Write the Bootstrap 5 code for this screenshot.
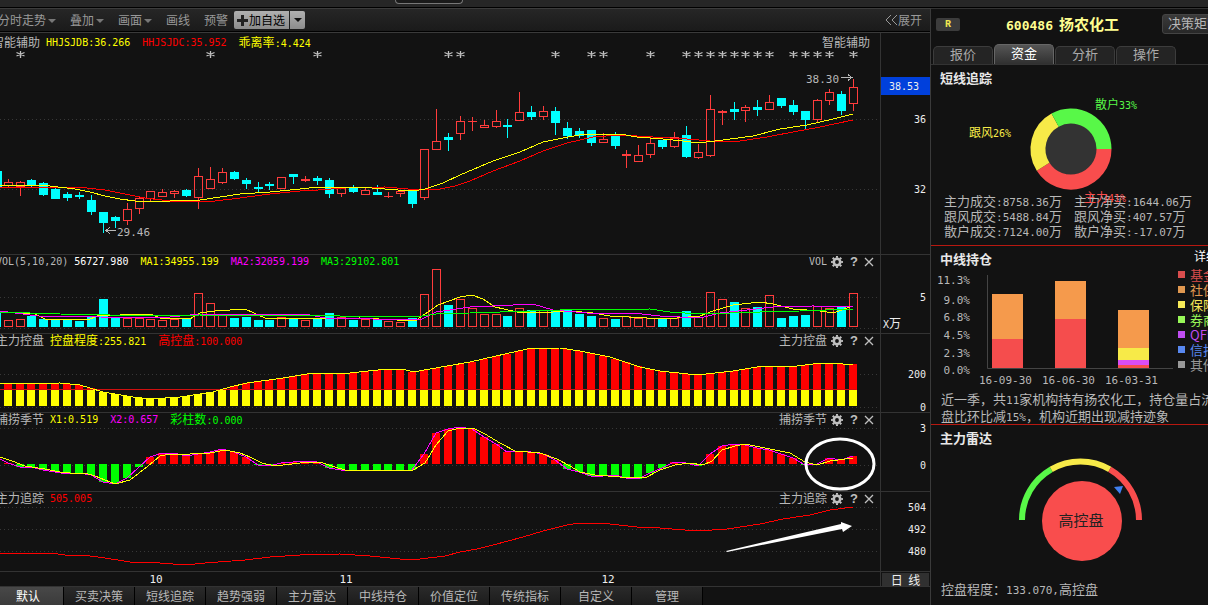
<!DOCTYPE html>
<html lang="zh-CN">
<head>
<meta charset="utf-8">
<meta name="viewport" content="width=device-width, initial-scale=1">
<title>600486 扬农化工</title>
<link href="https://cdn.jsdelivr.net/npm/bootstrap@5.3.0/dist/css/bootstrap.min.css" rel="stylesheet">
<style>
  body { background: #121212; color: #b8b8b8; font: 12px/14px "Noto Sans CJK SC", sans-serif; overflow-x: hidden; }
  button, a { font: inherit; color: inherit; text-decoration: none; }
  button { background: none; border: 0; padding: 0; }
  svg { display: block; }
  .num { font-family: "DejaVu Sans Mono", "Noto Sans CJK SC", monospace; font-size: 10px; line-height: 1; }
  .num-lg { font-family: "DejaVu Sans Mono", "Noto Sans CJK SC", monospace; font-size: 11px; line-height: 1; }
  .t-yellow { color: #ff0; } .t-red { color: #f00; } .t-magenta { color: #f0f; } .t-green { color: #0f0; }

  .top-strip { height: 8px; background: #262626; border-bottom: 1px solid #000; }
  .top-pill { width: 68px; height: 4px; margin-left: 395px; background: #1a1a1a; border: 1px solid #777; border-top: 0; border-radius: 0 0 8px 8px; }
  .market { min-width: 0; border-right: 1px solid #3a3a3a; }
  .tools { height: 25px; background: linear-gradient(#262626, #1a1a1a); border-top: 1px solid #3c3c3c; border-bottom: 1px solid #3a3a3a; box-shadow: inset 0 -1px #000; color: #999; gap: 14px; padding: 0 8px 1px 0; }
  .tools .first { margin-left: -2px; }
  .caret::after { content: ""; display: inline-block; margin-left: 2px; vertical-align: 2px; border: 4px solid transparent; border-top-color: #777; border-bottom: 0; }
  .add-group { height: 18px; margin-left: -8px; color: #000; }
  .add-group button { background: linear-gradient(#b0b0b0, #8c8c8c); border-radius: 2px 0 0 2px; padding: 0 4px 0 3px; gap: 1px; }
  .add-group button + button { border-radius: 0 2px 2px 0; margin-left: 1px; width: 15px; padding: 0; }

  .pane { border-bottom: 1px solid #333; }
  .pane-plot { min-width: 0; overflow: hidden; border-right: 1px solid #333; }
  .pane-head { height: 14px; white-space: nowrap; padding-right: 5px; margin-left: -4px; line-height: 12px; }
  .pane-head > .num, .pane-head .vals > .num { line-height: 14px; }
  .pane-head .vals { gap: 12px; margin-left: 6px; }
  .pane-head.main { height: 18px; margin-left: -8px; padding: 3px 10px 0 0; }
  .pane-head .tool { width: 12px; height: 13px; margin-left: 4px; color: #c0c0c0; display: flex; justify-content: center; align-items: center; }
  .pane-head .tool + .tool { margin-left: 5px; }
  .pane-head .tool + .tool + .tool { margin-left: 3px; }
  .q-mark { font: bold 13px/14px "Liberation Sans", sans-serif; }
  .axis-col { flex: 0 0 49px; }
  .plot { width: 100%; overflow: hidden; }
  .plot svg { overflow: visible; }
  svg text { font-family: "DejaVu Sans Mono", "Noto Sans CJK SC", monospace; }
  .axis-col text { font-size: 10px; fill: #eee; }
  .period { margin: 1px 1px 0; background: #303030; color: #eee; height: 13px; line-height: 12px; width: 47px; white-space: pre; }

  .tpl-bar { height: 19px; margin-left: -7px; }
  .tpl-bar button { flex: 0 0 71px; background: linear-gradient(#2a2a2a, #1b1b1b); border-right: 1px solid #000; padding-bottom: 2px; white-space: nowrap; }
  .tpl-bar button.active { background: linear-gradient(#484848, #3a3a3a); color: #fff; }

  .stock { flex: 0 0 277px; overflow: hidden; border-top: 1px solid #333; white-space: nowrap; }
  .stock-head { height: 35px; padding: 4px 0 9px 5px; }
  .r-mark { width: 24px; height: 13px; background: #3c3c3c; color: #f0e850; border-radius: 2px; font: bold 10px/13px "Liberation Mono", monospace; text-align: center; }
  .stock-name { color: #ffff90; font: bold 15px/18px "Noto Sans CJK SC", sans-serif; margin: 0 0 0 46px; width: 114px; }
  .stock-name .code { font: bold 13px/1 "DejaVu Sans Mono", monospace; margin-right: 6px; }
  .matrix { background: linear-gradient(#3a3a3a, #282828); border: 1px solid #444; border-radius: 3px; height: 20px; padding: 0 5px 2px; font-size: 13px; margin-left: 42px; }
  .stock-tabs { height: 21px; padding-left: 2px; gap: 1px; border-bottom: 1px solid #333; }
  .stock-tabs button { width: 60px; height: 18px; border: 1px solid #3c3c3c; border-bottom: 0; border-radius: 5px 5px 0 0; background: #242424; font-size: 13px; padding-bottom: 3px; color: #aaa; }
  .stock-tabs button.active { height: 20px; background: linear-gradient(#555, #303030); border-color: #666; color: #fff; }
  .block-title { font: bold 13px/18px "Noto Sans CJK SC", sans-serif; color: #e8e8e8; margin: 0; padding: 4px 0 1px 9px; }
  .block-rule { border-bottom: 1px solid #b81810; }
  .deal-grid { display: grid; grid-template-columns: 130px 130px; grid-auto-rows: 15px; padding: 0 0 6px 13px; font-size: 13px; line-height: 13px; }
  .detail-link { display: block; padding: 3px 0 4px 16px; }
  .holders { list-style: none; margin: 0; padding: 0; line-height: 15px; font-size: 13px; }
  .holders li::before { content: ""; flex: 0 0 7px; height: 7px; margin-right: 5px; background: currentColor; }
  .comment { font-size: 13px; line-height: 17px; margin: 0; padding-left: 10px; height: 34px; }
  .degree { font-size: 13px; padding-left: 10px; margin: 0; }
</style>
</head>
<body>
<div class="top-strip"><div class="top-pill"></div></div>
<div class="d-flex">
  <main class="market flex-grow-1">
    <div class="tools d-flex align-items-center text-nowrap">
      <button class="first caret">分时走势</button>
      <button class="caret">叠加</button>
      <button class="caret">画面</button>
      <button>画线</button>
      <button>预警</button>
      <div class="add-group d-flex">
        <button class="d-flex align-items-center"><svg width="11" height="11"><path d="M5.500 0v11M0 5.500h11" stroke="#222" stroke-width="3"/></svg>加自选</button>
        <button aria-label="更多"><svg width="15" height="18"><path d="M4 7h8l-4 4z" fill="#111"/></svg></button>
      </div>
      <a href="#" class="ms-auto d-flex align-items-center"><svg width="13" height="12"><path d="M6 1L1 6l5 5M12 1L7 6l5 5" fill="none" stroke="#999"/></svg>展开</a>
    </div>

    <section class="pane d-flex">
      <div class="pane-plot flex-grow-1">
        <div class="pane-head main d-flex">
          <span>智能辅助</span>
          <div class="vals d-flex"><span class="num t-yellow">HHJSJDB:36.266</span><span class="num t-red">HHJSJDC:35.952</span><span class="t-yellow">乖离率<span class="num">:4.424</span></span></div>
          <span class="ms-auto">智能辅助</span>
        </div>
        <svg class="plot" id="kline" height="203"></svg>
      </div>
      <svg class="axis-col" width="49" height="221">
        <rect y="44" width="49" height="18" fill="#0040dc"/>
        <text x="8" y="57">38.53</text><text x="45" y="90" text-anchor="end">36</text><text x="45" y="160" text-anchor="end">32</text>
      </svg>
    </section>

    <section class="pane d-flex">
      <div class="pane-plot flex-grow-1">
        <div class="pane-head d-flex">
          <span class="num">VOL(5,10,20)</span>
          <div class="vals d-flex"><span class="num text-white">56727.980</span><span class="num t-yellow">MA1:34955.199</span><span class="num t-magenta">MA2:32059.199</span><span class="num t-green">MA3:29102.801</span></div>
          <span class="ms-auto num">VOL</span><span class="d-flex" data-tools></span>
        </div>
        <svg class="plot" id="volume" height="64"></svg>
      </div>
      <svg class="axis-col" width="49" height="78"><text x="45" y="46" text-anchor="end">5</text><text x="2" y="73">X<tspan font-size="12">万</tspan></text></svg>
    </section>

    <section class="pane d-flex">
      <div class="pane-plot flex-grow-1">
        <div class="pane-head d-flex">
          <span>主力控盘</span>
          <div class="vals d-flex"><span class="t-yellow">控盘程度<span class="num">:255.821</span></span><span class="t-red">高控盘<span class="num">:100.000</span></span></div>
          <span class="ms-auto">主力控盘</span><span class="d-flex" data-tools></span>
        </div>
        <svg class="plot" id="control" height="64"></svg>
      </div>
      <svg class="axis-col" width="49" height="78"><text x="45" y="44" text-anchor="end">200</text><text x="45" y="77" text-anchor="end">0</text></svg>
    </section>

    <section class="pane d-flex">
      <div class="pane-plot flex-grow-1">
        <div class="pane-head d-flex">
          <span>捕捞季节</span>
          <div class="vals d-flex"><span class="num t-yellow">X1:0.519</span><span class="num t-magenta">X2:0.657</span><span class="t-green">彩柱数<span class="num">:0.000</span></span></div>
          <span class="ms-auto">捕捞季节</span><span class="d-flex" data-tools></span>
        </div>
        <svg class="plot" id="season" height="64"></svg>
      </div>
      <svg class="axis-col" width="49" height="78"><text x="45" y="19" text-anchor="end">3</text><text x="45" y="56" text-anchor="end">0</text></svg>
    </section>

    <section class="pane d-flex">
      <div class="pane-plot flex-grow-1">
        <div class="pane-head d-flex">
          <span>主力追踪</span>
          <div class="vals d-flex"><span class="num t-red">505.005</span></div>
          <span class="ms-auto">主力追踪</span><span class="d-flex" data-tools></span>
        </div>
        <svg class="plot" id="track" height="65"></svg>
      </div>
      <svg class="axis-col" width="49" height="79"><text x="45" y="19" text-anchor="end">504</text><text x="45" y="41" text-anchor="end">492</text><text x="45" y="63" text-anchor="end">480</text></svg>
    </section>

    <div class="pane d-flex">
      <div class="pane-plot flex-grow-1"><svg class="plot" id="months" height="14"></svg></div>
      <div class="axis-col"><button class="period d-block">日  线</button></div>
    </div>

    <div class="overflow-hidden">
      <div class="tpl-bar d-flex">
        <button class="active">默认</button><button>买卖决策</button><button>短线追踪</button><button>趋势强弱</button><button>主力雷达</button><button>中线持仓</button><button>价值定位</button><button>传统指标</button><button>自定义</button><button>管理</button>
      </div>
    </div>
  </main>

  <aside class="stock">
    <div class="stock-head d-flex align-items-center">
      <span class="r-mark flex-shrink-0">R</span>
      <h1 class="stock-name flex-shrink-0"><span class="code">600486</span>扬农化工</h1>
      <button class="matrix flex-shrink-0">决策矩阵</button>
    </div>
    <div class="stock-tabs d-flex align-items-end">
      <button>报价</button><button class="active">资金</button><button>分析</button><button>操作</button>
    </div>

    <section class="block-rule">
      <h2 class="block-title">短线追踪</h2>
      <svg width="277" height="106" viewBox="0 0 277 106" class="overflow-visible position-relative z-1">
        <circle cx="140" cy="60" r="27" fill="#333"/>
        <g fill="none" stroke-width="15">
          <path d="M173 61A33 33 0 0 1 112.100 78.700" stroke="#f94d4d"/>
          <path d="M112.100 78.700A33 33 0 0 1 124.100 32.100" stroke="#f7ea48"/>
          <path d="M124.100 32.100A33 33 0 0 1 173 61" stroke="#58f848"/>
        </g>
        <g font-size="10">
          <text x="164" y="21" fill="#58f848"><tspan font-size="12">散户</tspan>33%</text>
          <text x="38" y="49" fill="#f7ea48"><tspan font-size="12">跟风</tspan>26%</text>
          <text x="153" y="114" fill="#f94d4d"><tspan font-size="12">主力</tspan>41%</text>
        </g>
      </svg>
      <div class="deal-grid">
        <span>主力成交<span class="num-lg">:8758.36</span>万</span><span>主力净买<span class="num-lg">:1644.06</span>万</span>
        <span>跟风成交<span class="num-lg">:5488.84</span>万</span><span>跟风净买<span class="num-lg">:407.57</span>万</span>
        <span>散户成交<span class="num-lg">:7124.00</span>万</span><span>散户净买<span class="num-lg">:-17.07</span>万</span>
      </div>
    </section>

    <section class="block-rule">
      <div class="d-flex">
        <div class="flex-shrink-0">
          <h2 class="block-title">中线持仓</h2>
          <svg width="247" height="121" viewBox="0 0 247 121">
            <path d="M56.500 6v93.500H242" fill="none" stroke="#444"/>
            <g shape-rendering="crispEdges">
              <path fill="#f59a4c" d="M61 25h31v45H61zM124 12h31v38h-31zM187 41h31v38h-31z"/>
              <path fill="#f54d4d" d="M61 70h31v29H61zM124 50h31v49h-31zM187 96h31v3h-31z"/>
              <path fill="#f7ea48" d="M187 79h31v12h-31z"/><path fill="#d94df5" d="M187 91h31v5h-31z"/>
            </g>
            <g font-size="11" fill="#b8b8b8" text-anchor="end">
              <text x="39" y="15">11.3%</text><text x="39" y="35">9.0%</text><text x="39" y="52">6.8%</text><text x="39" y="70">4.5%</text><text x="39" y="88">2.3%</text><text x="39" y="105">0.0%</text>
            </g>
            <g font-size="11" fill="#b8b8b8">
              <text x="48" y="115">16-09-30</text><text x="111" y="115">16-06-30</text><text x="174" y="115">16-03-31</text>
            </g>
          </svg>
        </div>
        <div>
          <a href="#" class="detail-link text-white">详细</a>
          <ul class="holders">
            <li class="d-flex align-items-center" style="color:#d94d4d">基金</li>
            <li class="d-flex align-items-center" style="color:#e09850">社保</li>
            <li class="d-flex align-items-center" style="color:#f7ea58">保险</li>
            <li class="d-flex align-items-center" style="color:#98f858">券商</li>
            <li class="d-flex align-items-center" style="color:#c04df0">QFII</li>
            <li class="d-flex align-items-center" style="color:#5888f0">信托</li>
            <li class="d-flex align-items-center" style="color:#989898">其他</li>
          </ul>
        </div>
      </div>
      <p class="comment">近一季，共<span class="num-lg">11</span>家机构持有扬农化工，持仓量占流通<br>盘比环比减<span class="num-lg">15%</span>，机构近期出现减持迹象</p>
    </section>

    <section>
      <h2 class="block-title">主力雷达</h2>
      <svg width="277" height="134" viewBox="0 0 277 134">
        <g fill="none" stroke-width="6">
          <path d="M91 72A58.500 58.500 0 0 1 120.200 21.300" stroke="#58f848"/>
          <path d="M120.200 21.300A58.500 58.500 0 0 1 178.800 21.300" stroke="#f7ea48"/>
          <path d="M178.800 21.300A58.500 58.500 0 0 1 208 72" stroke="#f94d4d"/>
        </g>
        <circle cx="151" cy="73" r="40" fill="#f94d4d"/>
        <path d="M183 39l9-1-3 8z" fill="#4080f0"/>
        <text x="150" y="78" font-size="15" fill="#222" text-anchor="middle">高控盘</text>
      </svg>
      <p class="degree">控盘程度：<span class="num-lg">133.070,</span>高控盘</p>
    </section>
  </aside>
</div>

<script>
// Header tools shared by the indicator panes
document.querySelectorAll('[data-tools]').forEach(el => {
  el.innerHTML =
    '<button class="tool" aria-label="设置"><svg width="12" height="12"><g fill="none" stroke="#c0c0c0"><circle cx="6" cy="6" r="3.200" stroke-width="2.600"/><circle cx="6" cy="6" r="5" stroke-width="2" pathLength="16" stroke-dasharray="1 1" stroke-dashoffset=".5"/></g></svg></button>' +
    '<button class="tool q-mark" aria-label="帮助">?</button>' +
    '<button class="tool" aria-label="关闭"><svg width="12" height="12"><path d="M2 2l8 8M10 2l-8 8" stroke="#c0c0c0" stroke-width="1.300"/></svg></button>';
});

// All panes share one canvas, 880 wide, anchored to the right edge: newest bar stays visible.
const WIDTH = 880, RED = '#ff3c3c', CYAN = '#00ffff';
const barX = i => Math.floor(8.15 + 11.9 * i);
const rect = (x, y, w, h, c) => `<rect x="${x}" y="${y}" width="${w}" height="${h}" fill="${c}"/>`;
const box = (x, y, w, h) => `<rect x="${x + .5}" y="${y + .5}" width="${w - 1}" height="${Math.max(h - 1, 1)}" fill="none" stroke="${RED}"/>`;
const line = (pts, c) => `<polyline points="${pts}" fill="none" stroke="${c}"/>`;
function draw(id, top, grid, body) {
  const g = grid.map(y => `<line x2="100%" y1="${y - top + .5}" y2="${y - top + .5}" stroke="#383838" stroke-dasharray="1 3"/>`).join('');
  document.getElementById(id).innerHTML = `${g}<svg x="100%"><g transform="translate(${-WIDTH},${-top})">${body}</g></svg>`;
}

// kind, high, low, body top, body bottom
const candles = `r179,188,182,186 r181,196,182,187 c179,188,180,185 c182,196,183,195 c188,199,189,199 c192,201,194,198 c192,199,195,197 c195,215,200,212 c212,233,212,223 c216,228,217,221
r203,225,209,221 r196,214,198,209 r191,201,191,199 r189,197,192,197 r190,198,191,194 c189,197,190,196 r168,209,176,198 r167,189,179,189 r168,184,172,183 c171,180,172,179
c178,189,180,184 c182,192,187,189 c182,190,184,186 r177,189,177,189 c174,184,174,177 r176,182,179,181 c176,185,178,181 c178,198,180,194 r188,197,188,194 c185,193,188,192
r188,195,190,195 c185,195,192,195 r192,198,196,197 r190,197,191,194 c190,208,190,204 r149,200,149,198 r109,150,141,150 c133,151,137,140 r116,140,121,134 r117,131,121,122
r120,128,125,128 r110,128,121,127 c119,138,125,127 r92,121,112,121 c106,120,112,117 r106,120,111,117 c107,135,111,123 c122,139,128,136 c128,138,131,136 c130,146,130,143
r133,143,139,143 c132,149,136,146 r150,168,154,156 r145,162,155,162 r137,158,143,155 c140,149,140,147 r132,148,137,147 c126,158,135,157 r144,159,152,158 r95,157,109,156
r110,125,111,113 c102,120,109,112 r105,122,107,111 c100,116,107,110 r95,110,102,110 c98,108,98,106 c100,115,105,112 c111,129,111,120 r99,123,100,120 r89,105,92,101
c91,115,94,111 r79,111,87,104`.split(/\s+/).map(s => [s[0], ...s.slice(1).split(',').map(Number)]);

let k = rect(-7, 171, 9, 16, CYAN);
candles.forEach(([t, hi, lo, a, b], i) => {
  const x = barX(i);
  if (t === 'c') k += rect(x, hi, 1, lo - hi, CYAN) + rect(x - 4, a, 9, b - a, CYAN);
  else k += rect(x, hi, 1, a - hi, RED) + rect(x, b, 1, Math.max(lo - b, 0), RED) + (b - a < 3 ? rect(x - 4, a, 9, b - a, RED) : box(x - 4, a, 9, b - a));
});
k += line('0,187 50,187 78,187 105,190 125,194 145,198 170,201 215,201 240,198 270,194 300,191 318,190 345,188 385,187 408,189 440,189 455,186 470,181 493,171 520,161 543,151 567,143 593,137 620,135 653,137 687,139 710,141 740,141 767,137 793,132 820,127 853,120', '#f00');
k += line('0,185 26,185 50,186 75,189 90,192 105,196 120,199 135,201 170,201 200,200 220,197 240,194 270,192 300,189 318,187 347,187 372,188 398,190 413,191 425,189 443,183 460,175 493,161 520,152 543,142 563,138 585,134 620,134 637,137 663,139 683,141 698,143 723,140 753,136 780,129 807,125 833,119 853,114', '#ff0');
[1, 17, 26, 37, 38, 46, 49, 50, 54, 57, 58, 59, 60, 61, 62, 63, 64, 66, 67, 68, 69, 71].forEach(i => {
  const x = barX(i) + .5;
  k += `<path d="M${x} 50v8M${x - 4} 52.500l8 3.500M${x + 4} 52.500l-8 3.500" stroke="#c0c0c0" stroke-width="1.300" shape-rendering="auto"/>`;
});
k += '<g fill="#b8b8b8" font-size="11"><text x="806" y="83">38.30</text><text x="117" y="236">29.46</text></g>' +
     '<path d="M841 77.500h11M848 74.500l4 3-4 3M116 230.500h-10M110 227.500l-4 3 4 3" fill="none" stroke="#b8b8b8"/>';
draw('kline', 51, [119, 189], k);

// Volume
const vol = [320,319,316,319,319,319,321,317,299,318,318,318,319,320,319,319,293,303,315,318,317,320,320,317,318,320,319,313,317,320,319,319,321,322,318,294,269,305,299,308,314,314,316,308,310,310,311,310,314,316,318,319,316,318,318,319,318,311,317,292,299,302,308,307,295,318,316,315,306,308,307,293];
let v = rect(-7, 313, 8, 14, CYAN);
vol.forEach((y, i) => { const x = barX(i) - 4; v += candles[i][0] === 'c' ? rect(x, y, 9, 327 - y, CYAN) : box(x, y, 9, 327 - y); });
v += line('0,312 35,314 45,319 90,319 100,315 120,315 150,314 160,318 190,319 200,313 215,311 245,309 265,318 300,319 360,318 415,321 428,312 438,305 460,297 472,295 483,299 495,307 517,312 537,313 570,311 593,313 610,316 647,318 677,318 700,316 713,311 733,305 760,302 773,304 793,309 820,311 833,313 853,306', '#ff0');
v += line('0,311 38,316 100,317 160,318 200,314 305,314 325,318 420,320 436,312 470,307 493,306 533,304 553,310 587,313 633,313 660,316 700,318 720,313 747,310 773,307 813,306 853,307', '#f0f');
v += line('0,312 60,314 160,316 200,315 340,316 415,317 436,314 470,313 560,310 650,309 670,312 700,314 760,312 800,311 853,309', '#0f0');
draw('volume', 269, [297, 328], v);

// Control degree: the part above the 100 line is red
const ctl = [[-5,383],[0,383],[20,384],[60,383],[80,385],[103,392],[133,397],[150,399],[180,397],[213,392],[230,387],[247,383],[283,378],[313,373],[350,373],[387,369],[403,369],[413,372],[430,369],[470,362],[483,359],[527,349],[560,348],[580,351],[610,357],[640,367],[660,371],[697,375],[733,371],[763,366],[797,366],[813,364],[833,363],[843,364],[858,364]];
const at = x => { const j = ctl.findIndex(p => p[0] >= x), a = ctl[j - 1], b = ctl[j]; return Math.round(a[1] + (b[1] - a[1]) * (x - a[0]) / (b[0] - a[0])); };
let c = rect(-7, 383, 7, 6, '#f00') + rect(-7, 390, 7, 16, '#ff0');
for (let i = 0; i < 72; i++) {
  const x = barX(i), y = at(x);
  if (y < 389) c += rect(x - 4, y, 8, 390 - y, '#f00');
  c += rect(x - 4, Math.max(390, y), 8, 406 - Math.max(390, y), '#ff0');
}
c += rect(0, 389, 856, 1, '#d01010') + line(ctl.slice(0, -1).join(' ') + ' 853,364', '#ff0');
draw('control', 348, [374, 407], c);

// Season indicator
const sea = [463,467,467,470,472,474,473,475,482,484,478,467,457,453,453,456,454,452,449,452,457,465,466,463,462,461,462,468,470,470,470,470,470,470,470,454,433,429,427,429,437,444,452,451,452,454,460,469,472,476,476,475,478,479,473,468,462,463,466,454,446,444,445,448,450,454,458,465,464,458,460,456];
let s = '';
sea.forEach((y, i) => { if (y !== 464) s += y < 464 ? rect(barX(i) - 4, y, 8, 464 - y, '#f00') : rect(barX(i) - 4, 464, 8, y - 464, '#0f0'); });
s += line('0,459 ' + sea.map((y, i) => barX(i) + ',' + y).join(' '), '#f0f');
s += line('0,457 12,461 25,466 45,469 60,472 70,473 85,473 95,476 115,484 130,480 148,466 160,456 170,454 190,454 210,453 225,450 240,453 250,457 262,463 275,466 300,463 320,462 335,467 345,470 400,470 413,470 425,463 436,445 448,431 460,428 473,428 485,434 500,443 515,451 540,453 557,459 570,466 580,472 595,475 620,477 645,478 660,470 675,465 690,463 703,465 712,461 722,450 735,446 745,444 770,449 790,453 805,462 817,465 830,461 853,458', '#ff0');
s += '<ellipse cx="840" cy="464" rx="34" ry="25" fill="none" stroke="#fff" stroke-width="3" shape-rendering="auto"/>';
draw('season', 427, [428, 465], s);

// Main force tracking
let t = line('0,554 10,553 50,553 65,555 90,556 105,558 130,562 160,563 185,565 205,563 245,560 270,557 300,555 340,554 370,556 400,559 420,559 445,556 460,552 477,549 493,545 523,537 543,531 567,525 580,523 610,524 637,527 660,528 697,531 727,529 760,524 783,519 810,515 830,510 853,507', '#f00');
t += '<path d="M726 551l115-27v-2l11 4-9 6-1-3-115 23z" fill="#fff" shape-rendering="auto"/>';
draw('track', 506, [507, 529, 551], t);

draw('months', 572, [], '<g fill="#eee" font-size="11" text-anchor="middle"><text x="156" y="583">10</text><text x="346" y="583">11</text><text x="608" y="583">12</text></g>');
document.querySelectorAll('.plot').forEach(p => p.setAttribute('shape-rendering', 'crispEdges'));
</script>
<script src="https://cdn.jsdelivr.net/npm/bootstrap@5.3.0/dist/js/bootstrap.bundle.min.js"></script>
</body>
</html>
